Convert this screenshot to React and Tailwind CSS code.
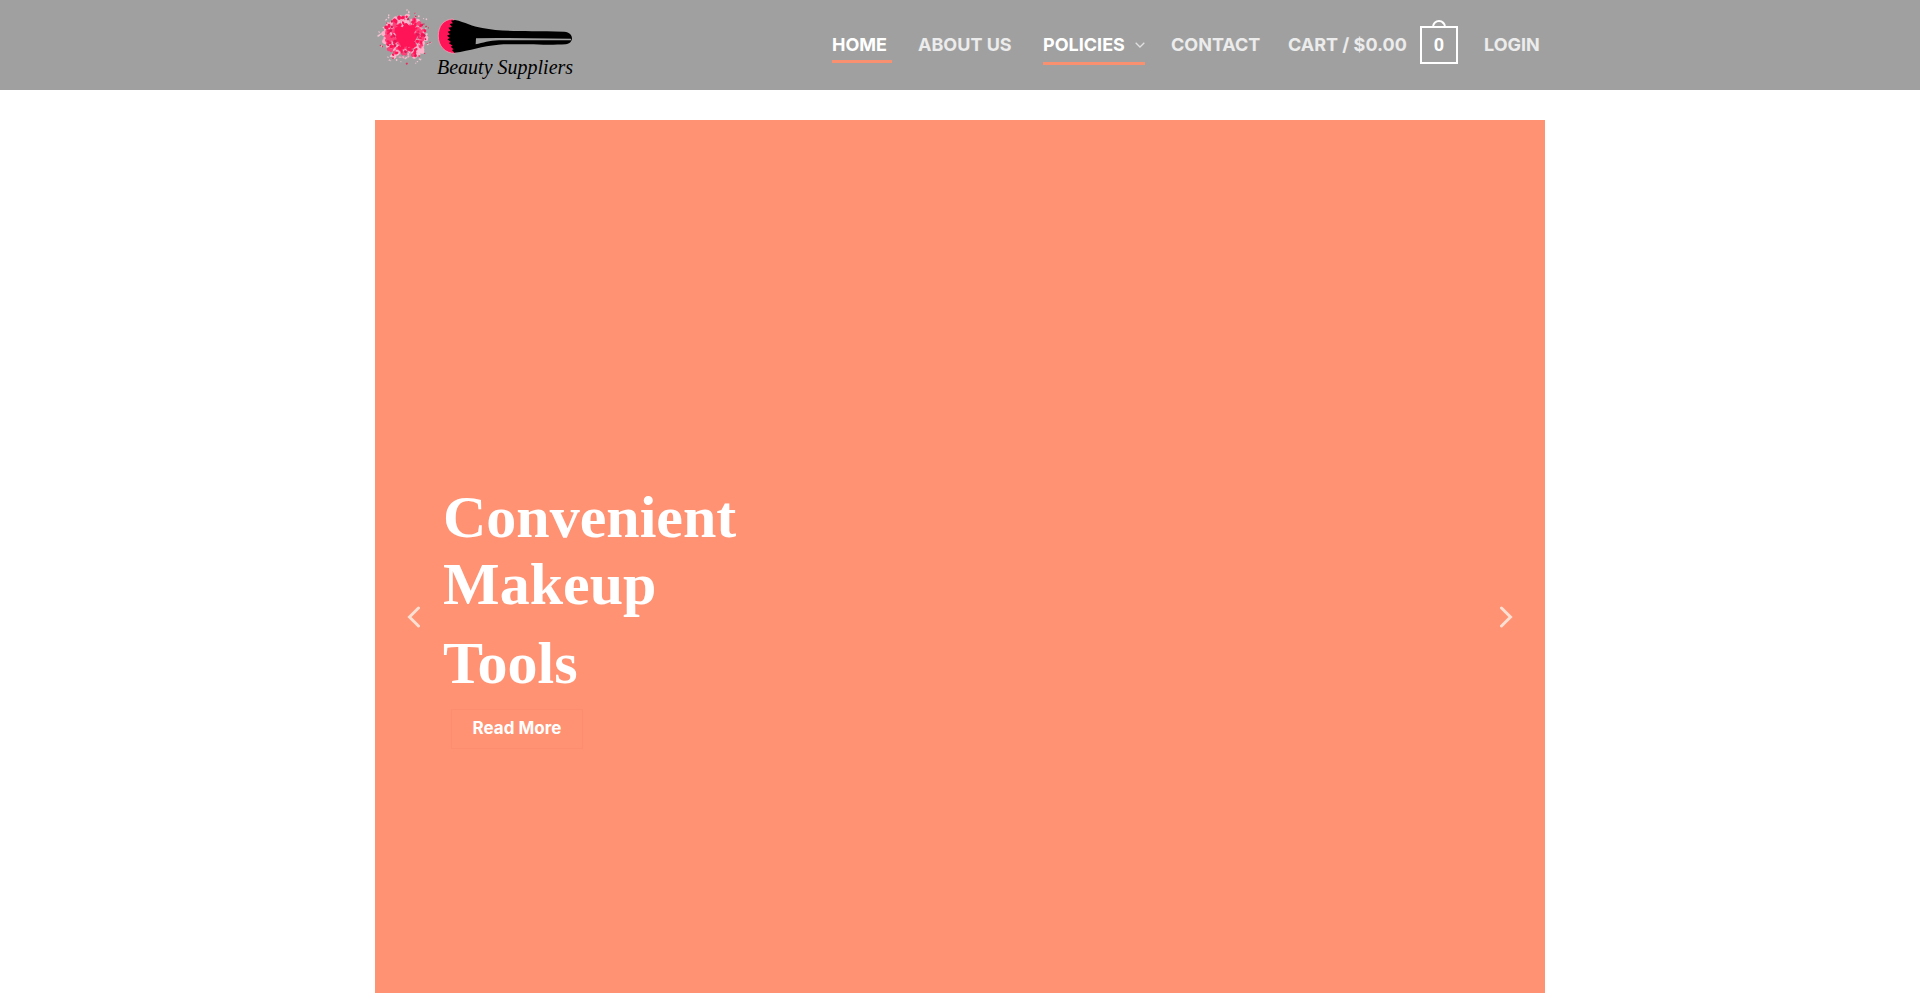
import React from 'react';
import clsx from 'clsx';

const navLinks = [
  { label: 'HOME', href: '#home', active: true, width: 'min-w-[60px]' },
  { label: 'ABOUT US', href: '#about', width: 'min-w-[99px]' },
  { label: 'POLICIES', href: '#policies', active: true, dropdown: true, width: 'min-w-[102px]' },
  { label: 'CONTACT', href: '#contact', width: 'min-w-[91px]' },
];

// Small seeded generator so the powder looks the same on every render
const createRandom = (seed) => () => {
  seed = (seed * 16807) % 2147483647;
  return seed / 2147483647;
};

const random = createRandom(4271);

const scatter = (count, minRadius, maxRadius, minSize, maxSize) =>
  Array.from({ length: count }, () => {
    const angle = random() * Math.PI * 2;
    const distance = minRadius + random() * (maxRadius - minRadius);
    return {
      x: 120 + Math.cos(angle) * distance,
      y: 112 + Math.sin(angle) * distance,
      rx: minSize + random() * (maxSize - minSize),
      ry: minSize + random() * (maxSize - minSize) * 0.7,
      turn: random() * 180,
    };
  });

const powderLayers = [
  { color: '#f3c3d1', grains: scatter(50, 55, 84, 1.5, 3.5) },
  { color: '#ffb3cb', grains: scatter(150, 10, 66, 5, 9) },
  { color: '#ff3f78', grains: scatter(120, 8, 60, 4, 9) },
  { color: '#ffa9c4', grains: scatter(55, 28, 62, 2, 5) },
  { color: '#ff1457', grains: scatter(80, 14, 64, 3, 7) },
  { color: '#d81b57', grains: scatter(24, 30, 64, 2, 5) },
  { color: '#e0305f', grains: scatter(14, 66, 80, 1.5, 4) },
];

const Logo = () => (
  <svg width="200" height="90" viewBox="0 0 200 90" role="img" aria-label="Beauty Suppliers">
    <g transform="translate(-10 0) scale(0.3333)">
      {powderLayers.map((layer) => (
        <g key={layer.color} fill={layer.color}>
          {layer.grains.map((g, i) => (
            <ellipse
              key={i}
              cx={g.x}
              cy={g.y}
              rx={g.rx}
              ry={g.ry}
              transform={`rotate(${g.turn} ${g.x} ${g.y})`}
            />
          ))}
        </g>
      ))}
      <path
        fill="#ff1457"
        d="M90 84 L102 76 L112 82 L124 70 L134 78 L148 74 L152 90 L146 102 L156 112 L148 126 L156 138 L140 146 L128 136 L116 142 L106 128 L92 122 L98 108 L88 98 Z"
      />

      {/* Brush */}
      <path
        fill="#ff1457"
        stroke="#f7a9bf"
        strokeWidth="2"
        d="M264 57 C236 58 220 78 220 108 C220 138 240 160 270 160 L285 110 Z"
      />
      <path
        fill="#000"
        d="M258 62 L270 60 C300 66 322 80 352 84 C410 96 470 91 598 95 C628 97 628 131 602 133 C550 137 440 131 400 134 C350 138 318 152 268 158 L261 150 L266 148 L257 140 L263 137 L251 129 L258 126 L247 118 L255 114 L246 107 L255 103 L248 95 L257 92 L250 83 L261 81 L254 72 L264 70 Z"
      />
      <path fill="#a0a0a0" d="M333 115 L400 114 L618 116 L618 121 L402 121 C372 122 354 129 332 133 Z" />
    </g>
    <text x="62" y="74" fontSize="20" fontStyle="italic" fontFamily="'Liberation Serif', serif">
      Beauty Suppliers
    </text>
  </svg>
);

const NavLink = ({ link }) => (
  <a
    href={link.href}
    className={clsx(
      'relative flex items-center justify-between whitespace-nowrap',
      link.width,
      link.dropdown ? 'h-10' : 'h-9',
      link.active
        ? 'text-white after:absolute after:inset-x-0 after:bottom-0 after:h-[3px] after:bg-[#f9906f]'
        : 'text-white/80 hover:text-white'
    )}
  >
    {link.label}
    {link.dropdown && (
      <svg width="10" height="6" viewBox="0 0 10 6" fill="none" stroke="#e0e0e0" strokeWidth="1.3">
        <path d="M0.7 0.7 L5 5 L9.3 0.7" />
      </svg>
    )}
  </a>
);

const CartLink = () => (
  <a href="#cart" className="flex items-center justify-between gap-2 min-w-[170px] whitespace-nowrap text-white/80">
    CART / $0.00
    <span className="relative flex items-center justify-center w-[38px] h-[38px] border-2 border-white text-white font-[Roboto,sans-serif]">
      <span className="absolute left-1/2 bottom-full -translate-x-1/2 w-3.5 h-2 border-2 border-b-0 border-white rounded-t-full" />
      0
    </span>
  </a>
);

const Header = () => (
  <header className="bg-[#a0a0a0]">
    <div className="max-w-[1170px] h-[90px] mx-auto flex items-center justify-between">
      <a href="#home">
        <Logo />
      </a>
      <nav className="flex items-center gap-[26px] text-lg font-bold">
        {navLinks.map((link) => (
          <NavLink key={link.label} link={link} />
        ))}
        <CartLink />
        <a href="#login" className="min-w-[61px] text-white/80">
          LOGIN
        </a>
      </nav>
    </div>
  </header>
);

const SlideArrow = ({ direction }) => (
  <button
    type="button"
    aria-label={direction === 'left' ? 'Previous slide' : 'Next slide'}
    className={clsx(
      'absolute top-1/2 -translate-y-1/2 px-8 py-4 text-[#ffdfd2]',
      direction === 'left' ? 'left-0' : 'right-0'
    )}
  >
    <svg width="14" height="22" viewBox="0 0 14 22" fill="none" stroke="currentColor" strokeWidth="3" strokeLinecap="round">
      <path d={direction === 'left' ? 'M11.5 2 L2.5 11 L11.5 20' : 'M2.5 2 L11.5 11 L2.5 20'} />
    </svg>
  </button>
);

const Hero = () => (
  <section className="relative max-w-[1170px] h-screen mx-auto flex items-center px-[68px] bg-[#ff9273]">
    <div className="text-white">
      <h2 className="font-['Liberation_Serif',serif] text-[60px] leading-[67px] font-bold">
        Convenient
        <br />
        Makeup
        <span className="block mt-3">Tools</span>
      </h2>
      <button
        type="button"
        className="ml-2 mt-3 w-[132px] h-10 border border-[#fc8d6e] text-[17px] font-bold"
      >
        Read More
      </button>
    </div>
    <SlideArrow direction="left" />
    <SlideArrow direction="right" />
  </section>
);

const App = () => (
  <div className="min-h-screen bg-white font-[Inter,sans-serif]">
    <Header />
    <main className="pt-[30px]">
      <Hero />
    </main>
  </div>
);

export default App;
